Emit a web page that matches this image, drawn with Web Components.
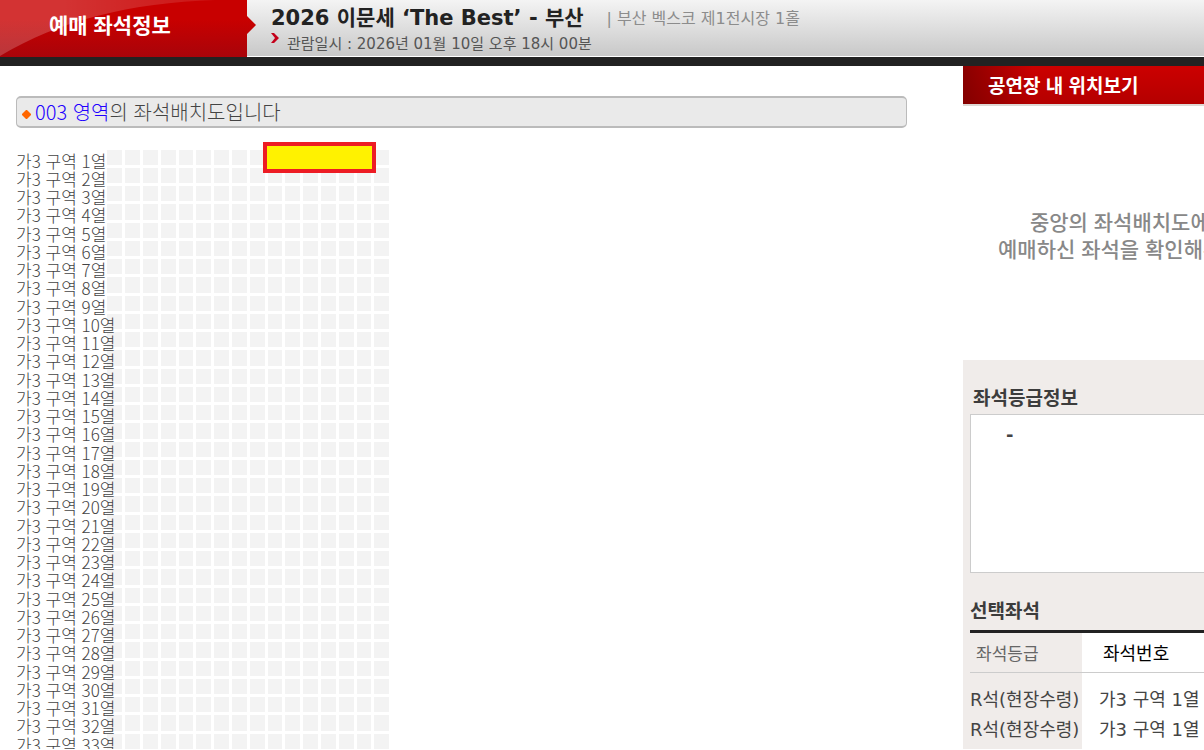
<!DOCTYPE html>
<html lang="ko">
<head>
<meta charset="utf-8">
<title>예매 좌석정보</title>
<style>
  html { scrollbar-width: none; }
  body {
    margin: 0;
    background: #fff;
    color: #444;
    font-family: "DejaVu Sans", "Noto Sans CJK KR", sans-serif;
    font-size: 18px;
  }
</style>
</head>
<body>

<seat-page>
  <booking-header slot="header" heading="예매 좌석정보">
    <span slot="title">2026 이문세 ‘The Best’ - 부산</span>
    <span slot="venue">| 부산 벡스코 제1전시장 1홀</span>
    <span slot="date">관람일시 : 2026년 01월 10일 오후 18시 00분</span>
  </booking-header>

  <area-notice area="003 영역">의 좌석배치도입니다</area-notice>
  <seat-map section="가3 구역" rows="33" cols="16"></seat-map>

  <location-panel slot="side" heading="공연장 내 위치보기">
    중앙의 좌석배치도에서<br>예매하신 좌석을 확인해주세요
  </location-panel>
  <seat-info slot="side">
    <grade-box heading="좌석등급정보">-</grade-box>
    <selected-seats heading="선택좌석"></selected-seats>
  </seat-info>
</seat-page>

<script>
(function () {
  'use strict';

  /**
   * Small base class: subclasses return their markup and styles from template()
   */
  class BaseElement extends HTMLElement {
    constructor() {
      super();
      this.attachShadow({ mode: 'open' });
    }

    connectedCallback() {
      this.shadowRoot.innerHTML = this.template();
    }
  }

  // Page frame: header on top, seat map left, info column right.
  // The info panels are wider than their column and are cut off at its edge.
  class SeatPage extends BaseElement {
    template() {
      return `
        <style>
          :host { display: block; }
          .cols { display: grid; grid-template-columns: minmax(0, 1fr) 241px; }
          main { padding: 30px 56px 0 16px; }
          aside { display: flex; overflow: hidden; }
          .panels { flex: none; width: 333px; display: flex; flex-direction: column; }
        </style>
        <slot name="header"></slot>
        <div class="cols">
          <main><slot></slot></main>
          <aside><div class="panels"><slot name="side"></slot></div></aside>
        </div>`;
    }
  }

  class BookingHeader extends BaseElement {
    template() {
      return `
        <style>
          :host { display: block; border-bottom: 9px solid #222; }
          header {
            display: flex; height: 56px;
            background: linear-gradient(#f4f4f4, #c8c8c8);
            border-bottom: 1px solid #fff;
          }
          .tab { position: relative; width: 247px; margin-bottom: -1px; }
          .tab svg { position: absolute; left: 0; top: 0; }
          h1 {
            position: relative;
            margin: 0; padding-left: 49px;
            font: bold 21px/48px "Noto Sans CJK KR", sans-serif;
            color: #fff;
          }
          .info { padding: 1px 0 0 24px; white-space: nowrap; }
          .line { display: flex; align-items: center; height: 30px; }
          .title { font-size: 21px; font-weight: bold; color: #222; }
          .venue { margin-left: 23px; padding-top: 2px; font-size: 16px; color: #8c8c8c; }
          .date {
            height: 22px; gap: 8px;
            font-family: "DejaVu Sans", "Noto Sans CJK KR", sans-serif;
            font-size: 15px; color: #555;
          }
          .date svg { align-self: flex-start; }
        </style>
        <header>
          <div class="tab">
            <svg width="257" height="57" viewBox="0 0 257 57" aria-hidden="true">
              <defs>
                <linearGradient id="red" x2="0" y2="1">
                  <stop offset=".35" stop-color="#c80000"/>
                  <stop offset="1" stop-color="#a8040a"/>
                </linearGradient>
                <linearGradient id="gloss">
                  <stop offset=".3" stop-color="#fff" stop-opacity=".2"/>
                  <stop offset="1" stop-color="#fff" stop-opacity=".08"/>
                </linearGradient>
              </defs>
              <path d="M0 0H247V16L256 25L247 34V57H0Z" fill="url(#red)"/>
              <path d="M0 0H215C130 3 60 20 0 56Z" fill="url(#gloss)"/>
            </svg>
            <h1>${this.getAttribute('heading')}</h1>
          </div>
          <div class="info">
            <div class="line">
              <span class="title"><slot name="title"></slot></span>
              <span class="venue"><slot name="venue"></slot></span>
            </div>
            <div class="line date">
              <svg width="8" height="13" viewBox="0 0 8 13" aria-hidden="true">
                <path d="M0 2H3L8 7L3 12H0L4 7Z" fill="#c4001a"/>
              </svg>
              <slot name="date"></slot>
            </div>
          </div>
        </header>`;
    }
  }

  class AreaNotice extends BaseElement {
    template() {
      return `
        <style>
          :host {
            display: flex; align-items: center;
            height: 28px; padding-left: 5px;
            background: #eaeaea;
            border: 2px solid #bbb;
            border-width: 2px 1px;
            border-radius: 5px;
            font: 300 20px/26px "Noto Sans CJK KR", sans-serif;
          }
          svg { margin: 4px 4px 0 0; }
          b { font-weight: inherit; color: #20f; }
        </style>
        <svg width="9" height="9" viewBox="0 0 9 9" aria-hidden="true">
          <path d="M4 0H5L9 4V5L5 9H4L0 5V4Z" fill="#f60"/>
        </svg>
        <span><b>${this.getAttribute('area')}</b><slot></slot></span>`;
    }
  }

  /**
   * Seat map: one label and a line of seats per row.
   * Labels with two digits run over the first seat.
   */
  class SeatMap extends BaseElement {
    template() {
      const rows = Number(this.getAttribute('rows'));
      const cols = Number(this.getAttribute('cols'));
      const section = this.getAttribute('section');
      const seats = '<i></i>'.repeat(cols);

      let html = '';
      for (let n = 1; n <= rows; n++) {
        html += `<div class="row"><span>${section} ${n}열</span><div class="seats">${seats}</div></div>`;
      }

      return `
        <style>
          :host {
            display: block; position: relative;
            margin-top: 22px;
            font: 300 17px/21px "Noto Sans CJK KR", sans-serif;
          }
          .map {
            display: grid; row-gap: 3px;
            grid-auto-rows: 15px 15px 15px 16px;
          }
          .row { display: flex; }
          .row span {
            position: relative; z-index: 1;
            width: 91px;
            white-space: nowrap;
          }
          .seats {
            display: grid; column-gap: 3px;
            grid-auto-flow: column;
            grid-auto-columns: 15px 15px 15px 15px 14px;
          }
          i { background: #f3f3f3; }
          .picked {
            position: absolute; left: 247px; top: -8px;
            width: 105px; height: 23px;
            background: #fff200;
            border: 4px solid #ed1c24;
          }
        </style>
        <div class="map">${html}</div>
        <div class="picked"></div>`;
    }
  }

  class LocationPanel extends BaseElement {
    template() {
      return `
        <style>
          :host {
            display: block; height: 294px;
            font-family: "Noto Sans CJK KR", sans-serif;
          }
          h2 {
            margin: 0; padding-left: 25px;
            font-size: 19px; line-height: 38px; color: #fff;
            background:
              linear-gradient(90deg, rgba(110, 0, 0, .7), transparent 70px),
              linear-gradient(#cc0000, #b40000);
            border-bottom: 2px solid #ddd8d4;
          }
          p {
            margin: 0; padding-top: 102px;
            font-size: 21px; font-weight: 500; line-height: 27px;
            color: #888; text-align: center; white-space: nowrap;
          }
        </style>
        <h2>${this.getAttribute('heading')}</h2>
        <p><slot></slot></p>`;
    }
  }

  class SeatInfo extends BaseElement {
    template() {
      return `
        <style>
          :host {
            display: flex; flex-direction: column; flex: 1;
            padding: 20px 7px 0;
            background: #f0ecea;
          }
        </style>
        <slot></slot>`;
    }
  }

  class GradeBox extends BaseElement {
    template() {
      return `
        <style>
          :host { display: block; }
          h3 {
            margin: 0; padding-left: 3px;
            font: bold 19px/34px "Noto Sans CJK KR", sans-serif;
            color: #3c3c3c;
          }
          .box {
            height: 147px; padding: 10px 0 0 35px;
            background: #fff; border: 1px solid #ccc;
            font-weight: bold; line-height: 20px;
          }
        </style>
        <h3>${this.getAttribute('heading')}</h3>
        <div class="box"><slot></slot></div>`;
    }
  }

  const SELECTED = [
    { grade: 'R석(현장수령)', seat: '가3 구역 1열' },
    { grade: 'R석(현장수령)', seat: '가3 구역 1열' },
  ];

  class SelectedSeats extends BaseElement {
    template() {
      const rows = SELECTED.map(s => `<tr><td>${s.grade}</td><td>${s.seat}</td></tr>`).join('');
      return `
        <style>
          :host { display: flex; flex-direction: column; flex: 1; padding-top: 20px; }
          h3 {
            margin: 0;
            font: bold 19px/34px "Noto Sans CJK KR", sans-serif;
            color: #3c3c3c;
          }
          .list {
            flex: 1; margin-top: 3px;
            border-top: 3px solid #222;
            background: linear-gradient(90deg, #f0ecea 112px, #fff 112px);
          }
          table { width: 100%; border-collapse: collapse; table-layout: fixed; }
          th, td {
            padding: 0; text-align: left; font-weight: normal;
            white-space: nowrap; line-height: 30px;
          }
          th { padding: 6px 0 3px; border-bottom: 1px solid #ccc; color: #000; }
          th:first-child { width: 112px; padding-left: 6px; box-sizing: border-box; font-size: 17px; color: #666; }
          th + th { padding-left: 21px; }
          td + td { padding-left: 17px; }
          tbody::before { content: ""; display: block; height: 12px; }
        </style>
        <h3>${this.getAttribute('heading')}</h3>
        <div class="list">
          <table>
            <thead><tr><th>좌석등급</th><th>좌석번호</th></tr></thead>
            <tbody>${rows}</tbody>
          </table>
        </div>`;
    }
  }

  customElements.define('seat-page', SeatPage);
  customElements.define('booking-header', BookingHeader);
  customElements.define('area-notice', AreaNotice);
  customElements.define('seat-map', SeatMap);
  customElements.define('location-panel', LocationPanel);
  customElements.define('seat-info', SeatInfo);
  customElements.define('grade-box', GradeBox);
  customElements.define('selected-seats', SelectedSeats);
})();
</script>
</body>
</html>
